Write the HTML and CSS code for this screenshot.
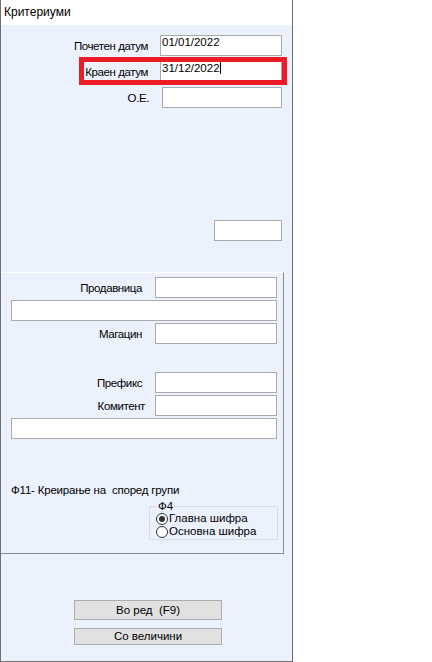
FILE: index.html
```html
<!DOCTYPE html>
<html lang="mk">
<head>
    <meta charset="UTF-8">
    <title>Критериуми</title>
    <link rel="stylesheet" href="styles.css">
</head>
<body>
    <div class="window">
        <div class="titlebar">Критериуми</div>

        <div class="content">
            <div class="row">
                <span class="lbl">Почетен датум</span>
                <div class="field">01/01/2022</div>
            </div>
            <div class="row">
                <span class="lbl">Краен датум</span>
                <div class="field">31/12/2022<span class="caret"></span></div>
            </div>
            <div class="row">
                <span class="lbl lbl-oe">О.Е.</span>
                <div class="field field-oe"></div>
            </div>

            <!-- highlight around the end date -->
            <div class="mark"></div>

            <div class="field field-short"></div>

            <div class="group">
                <div class="row">
                    <span class="lbl lbl-in">Продавница</span>
                    <div class="field"></div>
                </div>
                <div class="field field-wide"></div>
                <div class="row">
                    <span class="lbl lbl-in">Магацин</span>
                    <div class="field"></div>
                </div>

                <div class="row row-gap">
                    <span class="lbl lbl-in">Префикс</span>
                    <div class="field"></div>
                </div>
                <div class="row">
                    <span class="lbl lbl-in lbl-kom">Комитент</span>
                    <div class="field"></div>
                </div>
                <div class="field field-wide"></div>

                <div class="note">Ф11- Креирање на&nbsp; според групи</div>

                <fieldset class="radios">
                    <legend>Ф4</legend>
                    <label class="radio"><span class="dot checked"></span>Главна шифра</label>
                    <label class="radio"><span class="dot"></span>Основна шифра</label>
                </fieldset>
            </div>

            <div class="buttons">
                <div class="btn btn-ok">Во ред&nbsp; (F9)</div>
                <div class="btn btn-size">Со величини</div>
            </div>
        </div>
    </div>
</body>
</html>
```

FILE: styles.css
```css
body {
    margin: 0;
    background: #fff;
    font-family: "Liberation Sans", Arial, sans-serif;
    font-size: 11.5px;
    color: #000;
}

.window {
    position: relative;
    width: 291px;
    height: 661px;
    border: 1px solid #6f6f6f;
    border-top: none;
    background: #ebf2fe;
    display: flex;
    flex-direction: column;
}

.titlebar {
    height: 25px;
    background: #fff;
    padding-left: 3px;
    line-height: 24px;
    font-size: 12px;
}

.content {
    display: flex;
    flex-direction: column;
    padding-top: 10px;
}

.row {
    display: flex;
    align-items: center;
    height: 21px;
    margin-bottom: 5px;
}

.lbl {
    width: 147px;
    margin-right: 12px;
    text-align: right;
    white-space: nowrap;
    letter-spacing: -0.4px;
}

.lbl-oe {
    width: 148px;
    margin-right: 13px;
}

.field {
    box-sizing: border-box;
    width: 122px;
    height: 21px;
    border: 1px solid #ababab;
    background: #fff;
    padding-left: 1px;
    line-height: 13px;
    font-size: 11.5px;
}

.field-oe {
    width: 120px;
}

.caret {
    display: inline-block;
    width: 1px;
    height: 12px;
    background: #000;
    vertical-align: -2px;
}

.mark {
    position: absolute;
    left: 78px;
    top: 57px;
    width: 198px;
    height: 18px;
    border: 5px solid #ec1c24;
}

.field-short {
    width: 68px;
    align-self: flex-end;
    margin: 107px 10px 0 0;
}

/* lower group box */
.group {
    box-sizing: border-box;
    width: 283px;
    height: 282px;
    margin-top: 31px;
    padding-top: 4px;
    border-top: 1px solid #fff;
    border-right: 1px solid #8c8c8c;
    border-bottom: 1px solid #8c8c8c;
    display: flex;
    flex-direction: column;
}

.group .row {
    margin-bottom: 2px;
}

.lbl-in {
    width: 141px;
    margin-right: 13px;
}

.lbl-kom {
    width: 144px;
    margin-right: 10px;
}

.field-wide {
    width: 266px;
    margin: 0 0 2px 10px;
}

.row-gap {
    margin-top: 26px;
}

.note {
    margin: 42px 0 0 10px;
    line-height: 14px;
    letter-spacing: -0.2px;
}

.radios {
    width: 129px;
    box-sizing: border-box;
    margin: 3px 0 0 148px;
    padding: 0 0 1px 6px;
    border: 1px solid #d9dde3;
    min-width: 0;
}

.radios legend {
    padding: 0 1px;
    margin-left: 1px;
    line-height: 12px;
}

.radio {
    display: flex;
    align-items: center;
    gap: 1px;
    height: 13px;
    line-height: 13px;
}

.dot {
    box-sizing: border-box;
    width: 12px;
    height: 12px;
    border: 1px solid #333;
    border-radius: 50%;
    background: #fff;
    display: flex;
    align-items: center;
    justify-content: center;
}

.dot.checked::after {
    content: "";
    width: 6px;
    height: 6px;
    border-radius: 50%;
    background: #333;
}

.buttons {
    display: flex;
    flex-direction: column;
    gap: 8px;
    margin: 46px 0 0 73px;
}

.btn {
    box-sizing: border-box;
    width: 148px;
    border: 1px solid #adadad;
    background: #e1e1e1;
    text-align: center;
}

.btn-ok {
    height: 20px;
    line-height: 18px;
}

.btn-size {
    height: 17px;
    line-height: 15px;
}
```
